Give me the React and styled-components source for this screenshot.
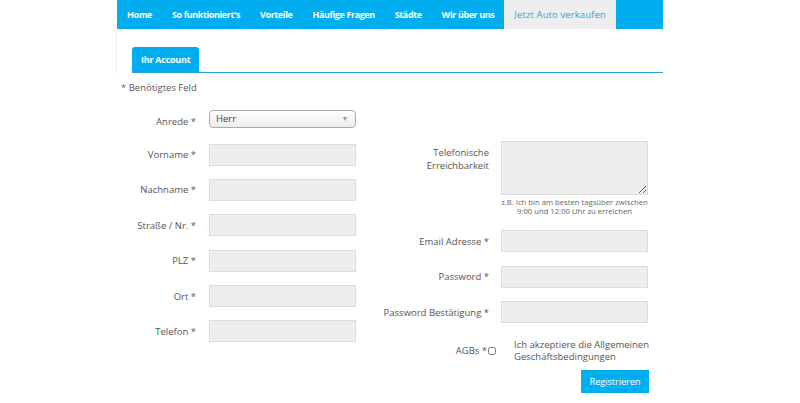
import React from 'react';
import styled, { createGlobalStyle } from 'styled-components';

const GlobalStyle = createGlobalStyle`
  html, body {
    margin: 0;
    padding: 0;
    background: #fff;
    font-family: 'Open Sans', 'Liberation Sans', sans-serif;
  }
`;

const navFont = `'Open Sans', 'Liberation Sans', sans-serif`;

const Page = styled.div`
  width: 546px;
  margin-left: 117px;
`;

const NavBar = styled.nav`
  display: flex;
  height: 29px;
  background: #00adef;
`;

const NavItem = styled.a`
  display: block;
  padding: 0 10px;
  line-height: 29px;
  text-decoration: none;
  white-space: nowrap;
  font-family: ${navFont};
  font-size: ${p => (p.$active ? '9.5px' : '9px')};
  font-weight: ${p => (p.$active ? 400 : 700)};
  letter-spacing: ${p => (p.$active ? '0.1px' : '-0.4px')};
  color: ${p => (p.$active ? '#3a9ad9' : '#fff')};
  background: ${p => (p.$active ? '#eeeeee' : 'transparent')};
`;

const TabArea = styled.div`
  border-left: 1px solid #f0f0f0;
  margin-left: -1px;
  padding-top: 18px;
`;

const TabStrip = styled.div`
  display: flex;
  margin-left: 15px;
  border-bottom: 1.5px solid #2a9fd8;
`;

const Tab = styled.div`
  height: 25px;
  line-height: 25px;
  padding: 0 9px;
  background: #00adef;
  color: #fff;
  border-radius: 3px 3px 0 0;
  font-family: ${navFont};
  font-weight: 700;
  font-size: 9px;
  letter-spacing: -0.25px;
`;

const Required = styled.div`
  margin-top: 8px;
  padding-left: 4px;
  font-size: 9.5px;
  line-height: 13px;
  color: #555;
`;

const Star = styled.span`
  color: #e2332c;
`;

const Form = styled.form`
  display: flex;
  gap: 13px;
  margin-top: 16px;
`;

const Column = styled.div`
  display: flex;
  flex-direction: column;
  width: ${p => p.$width}px;
  padding-top: ${p => p.$top || 0}px;
`;

const Row = styled.div`
  display: grid;
  grid-template-columns: ${p => p.$label}px 147px;
  column-gap: ${p => p.$gap}px;
  align-items: ${p => (p.$top ? 'start' : 'center')};
  margin-bottom: ${p => p.$mb}px;
`;

const Label = styled.label`
  text-align: right;
  font-size: 9.5px;
  line-height: 13px;
  color: #555;
  padding-top: ${p => p.$pt || 0}px;
`;

const Input = styled.input`
  box-sizing: border-box;
  display: block;
  width: 147px;
  height: 22px;
  margin: 0;
  border: 1px solid #dcdcdc;
  background: #eeeeee;
  outline: none;
`;

const SelectWrap = styled.div`
  position: relative;
  width: 147px;
  height: 18px;

  &::after {
    content: '';
    position: absolute;
    right: 9px;
    top: 7px;
    border-left: 2.5px solid transparent;
    border-right: 2.5px solid transparent;
    border-top: 4px solid #999;
  }
`;

const Select = styled.select`
  appearance: none;
  box-sizing: border-box;
  display: block;
  width: 100%;
  height: 18px;
  margin: 0;
  padding: 0 0 1px 6px;
  border: 1px solid #a9a9a9;
  border-radius: 4px;
  background: linear-gradient(#ffffff, #ececec);
  font-family: 'Open Sans', sans-serif;
  font-size: 9.5px;
  line-height: 16px;
  color: #444;
`;

const TextArea = styled.textarea`
  box-sizing: border-box;
  display: block;
  width: 147px;
  height: 54px;
  margin: 0;
  border: 1px solid #dcdcdc;
  background: #eeeeee;
  outline: none;
`;

const Hint = styled.div`
  margin-top: 3px;
  width: 147px;
  text-align: center;
  font-size: 7.7px;
  line-height: 9px;
  color: #666;
`;

const AgbRow = styled.div`
  display: flex;
  align-items: center;
  margin-bottom: 8px;
`;

const AgbLabel = styled.label`
  display: flex;
  align-items: center;
  justify-content: flex-end;
  width: 126px;
  font-size: 9.5px;
  color: #555;
`;

const Check = styled.input`
  width: 8px;
  height: 8px;
  margin: 0 0 0 1px;
`;

const AgbText = styled.div`
  margin-left: 18px;
  font-size: 9.5px;
  line-height: 11.5px;
  color: #555;
`;

const ButtonRow = styled.div`
  display: flex;
  justify-content: flex-end;
  padding-right: 1px;
`;

const Button = styled.button`
  height: 23px;
  width: 68px;
  padding: 0;
  border: none;
  background: #00adef;
  color: #fff;
  font-family: ${navFont};
  font-size: 9.5px;
  letter-spacing: -0.2px;
  cursor: pointer;
`;

const navItems = ['Home', "So funktioniert's", 'Vorteile', 'Häufige Fragen', 'Städte', 'Wir über uns'];

const leftFields = ['Vorname *', 'Nachname *', 'Straße / Nr. *', 'PLZ *', 'Ort *', 'Telefon *'];

const App = () => (
  <>
    <GlobalStyle />
    <Page>
      <NavBar>
        {navItems.map(item => (
          <NavItem key={item}>{item}</NavItem>
        ))}
        <NavItem $active>Jetzt Auto verkaufen</NavItem>
      </NavBar>
      <TabArea>
        <TabStrip>
          <Tab>Ihr Account</Tab>
        </TabStrip>
      </TabArea>
      <Required>
        <Star>*</Star> Benötigtes Feld
      </Required>
      <Form onSubmit={e => e.preventDefault()}>
        <Column $width={240}>
          <Row $label={79} $gap={13} $mb={15.5}>
            <Label $pt={4}>Anrede *</Label>
            <SelectWrap>
              <Select defaultValue="Herr">
                <option>Herr</option>
                <option>Frau</option>
              </Select>
            </SelectWrap>
          </Row>
          {leftFields.map(f => (
            <Row key={f} $label={79} $gap={13} $mb={13.4}>
              <Label>{f}</Label>
              <Input type="text" />
            </Row>
          ))}
        </Column>
        <Column $width={280} $top={31}>
          <Row $label={119} $gap={12} $mb={14} $top>
            <Label $pt={4.5}>
              Telefonische
              <br />
              Erreichbarkeit
            </Label>
            <div>
              <TextArea />
              <Hint>
                z.B. Ich bin am besten tagsüber zwischen
                <br />
                9:00 und 12:00 Uhr zu erreichen
              </Hint>
            </div>
          </Row>
          <Row $label={119} $gap={12} $mb={13.5}>
            <Label>Email Adresse *</Label>
            <Input type="text" />
          </Row>
          <Row $label={119} $gap={12} $mb={13.5}>
            <Label>Password *</Label>
            <Input type="password" />
          </Row>
          <Row $label={119} $gap={12} $mb={16}>
            <Label>Password Bestätigung *</Label>
            <Input type="password" />
          </Row>
          <AgbRow>
            <AgbLabel>
              AGBs *<Check type="checkbox" />
            </AgbLabel>
            <AgbText>
              Ich akzeptiere die Allgemeinen
              <br />
              Geschäftsbedingungen
            </AgbText>
          </AgbRow>
          <ButtonRow>
            <Button type="submit">Registrieren</Button>
          </ButtonRow>
        </Column>
      </Form>
    </Page>
  </>
);

export default App;
